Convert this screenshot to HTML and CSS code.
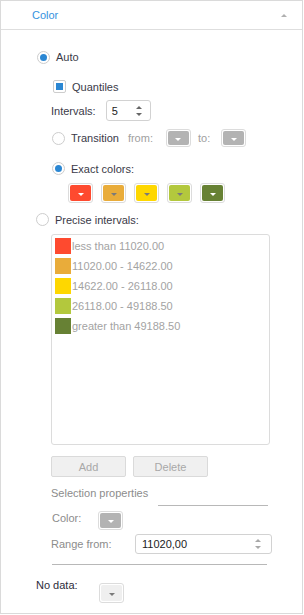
FILE: index.html
```html
<!DOCTYPE html>
<html lang="en">
<head>
  <meta charset="UTF-8" />
  <title>Color</title>
  <link rel="stylesheet" href="styles.css">
</head>
<body>

  <div class="panel">
    <div class="head">
      <span class="head-title">Color</span>
      <span class="caret-up"></span>
    </div>

    <div class="body">
      <div class="row row-auto">
        <span class="radio checked"></span>
        <span class="lbl">Auto</span>
      </div>

      <div class="row row-quant">
        <span class="check checked"></span>
        <span class="lbl">Quantiles</span>
      </div>

      <div class="row row-int">
        <span class="lbl">Intervals:</span>
        <div class="spin spin-int">
          <span class="spin-val">5</span>
          <span class="spin-arrows"><i class="up"></i><i class="down"></i></span>
        </div>
      </div>

      <div class="row row-trans">
        <span class="radio"></span>
        <span class="lbl">Transition</span>
        <span class="lbl muted from">from:</span>
        <span class="cbtn"><span class="cfill c-gray"><i class="tri white"></i></span></span>
        <span class="lbl muted to">to:</span>
        <span class="cbtn"><span class="cfill c-gray"><i class="tri white"></i></span></span>
      </div>

      <div class="row row-exact">
        <span class="radio checked"></span>
        <span class="lbl">Exact colors:</span>
      </div>

      <div class="row row-swatches">
        <span class="cbtn big"><span class="cfill c-red"><i class="tri white"></i></span></span>
        <span class="cbtn big"><span class="cfill c-orange"><i class="tri"></i></span></span>
        <span class="cbtn big"><span class="cfill c-yellow"><i class="tri"></i></span></span>
        <span class="cbtn big"><span class="cfill c-lime"><i class="tri"></i></span></span>
        <span class="cbtn big"><span class="cfill c-olive"><i class="tri white"></i></span></span>
      </div>

      <div class="row row-precise">
        <span class="radio"></span>
        <span class="lbl">Precise intervals:</span>
      </div>

      <div class="list">
        <div class="item"><span class="sw c-red"></span>less than 11020.00</div>
        <div class="item"><span class="sw c-orange"></span>11020.00 - 14622.00</div>
        <div class="item"><span class="sw c-yellow"></span>14622.00 - 26118.00</div>
        <div class="item"><span class="sw c-lime"></span>26118.00 - 49188.50</div>
        <div class="item"><span class="sw c-olive"></span>greater than 49188.50</div>
      </div>

      <div class="row row-btns">
        <button class="btn">Add</button>
        <button class="btn">Delete</button>
      </div>

      <div class="row row-sel">
        <span class="lbl muted2">Selection properties</span>
        <span class="sel-line"></span>
      </div>

      <div class="row row-color">
        <span class="lbl muted2 color-lbl">Color:</span>
        <span class="cbtn"><span class="cfill c-gray"><i class="tri white"></i></span></span>
      </div>

      <div class="row row-range">
        <span class="lbl muted2 range-lbl">Range from:</span>
        <div class="spin spin-range">
          <span class="spin-val">11020,00</span>
          <span class="spin-arrows light"><i class="up"></i><i class="down"></i></span>
        </div>
      </div>

      <div class="divider"></div>

      <div class="row row-nodata">
        <span class="lbl nodata-lbl">No data:</span>
        <span class="cbtn nodata-btn"><span class="cfill c-light"><i class="tri"></i></span></span>
      </div>
    </div>
  </div>

</body>
</html>
```

FILE: styles.css
```css
body {
  margin: 0;
  font-family: "Liberation Sans", Arial, sans-serif;
  font-size: 11px;
  color: #3a3a48;
  background: #fff;
}

.panel {
  width: 303px;
  height: 614px;
  box-sizing: border-box;
  border: 1px solid #dadada;
}

.head {
  height: 28px;
  border-bottom: 1px solid #dedede;
  display: flex;
  align-items: center;
  justify-content: space-between;
  padding: 0 15px 0 31px;
}

.head-title {
  color: #3592de;
}

.caret-up {
  width: 0;
  height: 0;
  border-left: 3px solid transparent;
  border-right: 3px solid transparent;
  border-bottom: 3px solid #b0b0b0;
}

.body {
  padding-left: 35px;
}

.row {
  display: flex;
  align-items: center;
}

.lbl {
  white-space: nowrap;
}

.muted {
  color: #a0a0a0;
}

.muted2 {
  color: #8c8c8c;
}

/* radio + checkbox */
.radio,
.check {
  width: 13px;
  height: 13px;
  box-sizing: border-box;
  border: 1px solid #cdcdcd;
  background: #fff;
  margin-right: 6px;
  display: flex;
  align-items: center;
  justify-content: center;
  flex: none;
}

.radio {
  border-radius: 50%;
}

.check {
  border-radius: 2px;
  margin-right: 6px;
}

.radio.checked::after {
  content: "";
  width: 7px;
  height: 7px;
  border-radius: 50%;
  background: #2b87d3;
}

.check.checked::after {
  content: "";
  width: 7px;
  height: 7px;
  background: #2b87d3;
}

.row-auto {
  margin-top: 18px;
  height: 18px;
  padding-left: 1px;
}

.row-quant {
  margin-top: 11px;
  height: 19px;
  padding-left: 17px;
}

.row-int {
  margin-top: 4px;
  height: 21px;
  padding-left: 15px;
}

/* spin boxes */
.spin {
  height: 21px;
  box-sizing: border-box;
  border: 1px solid #d2d2d2;
  border-radius: 3px;
  display: flex;
  align-items: center;
  justify-content: space-between;
  color: #222;
}

.spin-int {
  width: 45px;
  margin-left: 10px;
  padding: 0 8px 0 5px;
}

.spin-range {
  width: 137px;
  height: 20px;
  padding: 0 10px 0 6px;
}

.spin-arrows {
  display: flex;
  flex-direction: column;
  gap: 4px;
}

.spin-arrows i {
  display: block;
  width: 0;
  height: 0;
  border-left: 3px solid transparent;
  border-right: 3px solid transparent;
}

.spin-arrows .up {
  border-bottom: 3px solid #666;
}

.spin-arrows .down {
  border-top: 3px solid #666;
}

.spin-arrows.light .up {
  border-bottom-color: #a8a8a8;
}

.spin-arrows.light .down {
  border-top-color: #a8a8a8;
}

/* colour buttons */
.cbtn {
  width: 25px;
  height: 18px;
  box-sizing: border-box;
  border: 1px solid #dcdcdc;
  border-radius: 3px;
  padding: 1px;
  background: #fff;
  display: flex;
  flex: none;
}

.cbtn.big {
  height: 20px;
}

.cfill {
  flex: 1;
  border-radius: 2px;
  display: flex;
  align-items: center;
  justify-content: center;
  padding-top: 2px;
}

.tri {
  width: 0;
  height: 0;
  border-left: 3px solid transparent;
  border-right: 3px solid transparent;
  border-top: 3px solid #7a7a7a;
}

.tri.white {
  border-top-color: #fff;
}

.c-red { background: #fe4a2f; }
.c-orange { background: #e9ac3a; }
.c-yellow { background: #fed700; }
.c-lime { background: #b3c83d; }
.c-olive { background: #678134; }
.c-gray { background: #b3b3b3; }
.c-light { background: #efefef; }

.row-trans {
  margin-top: 8px;
  height: 18px;
  padding-left: 16px;
}

.from {
  margin-left: 9px;
  margin-right: 13px;
}

.to {
  margin-left: 7px;
  margin-right: 11px;
}

.row-exact {
  margin-top: 12px;
  height: 19px;
  padding-left: 16px;
}

.row-swatches {
  margin-top: 5px;
  height: 20px;
  padding-left: 32px;
  gap: 8px;
}

.row-precise {
  margin-top: 7px;
  height: 19px;
}

/* interval list */
.list {
  margin: 5px 0 0 15px;
  width: 219px;
  height: 211px;
  box-sizing: border-box;
  border: 1px solid #dcdcdc;
  border-radius: 3px;
  padding: 3px 3px;
  color: #a3a3a3;
}

.item {
  display: flex;
  align-items: center;
  height: 16px;
  margin-bottom: 4px;
  white-space: nowrap;
}

.sw {
  width: 16px;
  height: 16px;
  margin-right: 1px;
  flex: none;
}

.row-btns {
  margin-top: 11px;
  padding-left: 15px;
  gap: 7px;
}

.btn {
  width: 75px;
  height: 21px;
  box-sizing: border-box;
  border: 1px solid #dadada;
  border-radius: 2px;
  background: #f0f0f0;
  color: #a8a8a8;
  font-family: inherit;
  font-size: 11px;
  padding: 0;
}

.row-sel {
  margin-top: 8px;
  padding-left: 15px;
  width: 217px;
  align-items: flex-start;
}

.row-sel .lbl {
  line-height: 16px;
}

.sel-line {
  flex: 1;
  height: 20px;
  margin-left: 10px;
  border-bottom: 1px solid #b8b8b8;
}

.row-color {
  margin-top: 5px;
  padding-left: 16px;
  align-items: flex-start;
}

.color-lbl {
  width: 46px;
  line-height: 15px;
}

.row-color .cbtn {
  height: 19px;
}

.row-range {
  margin-top: 4px;
  height: 20px;
  padding-left: 15px;
}

.range-lbl {
  width: 84px;
}

.divider {
  margin: 10px 0 0 16px;
  width: 215px;
  border-top: 1px solid #b8b8b8;
}

.row-nodata {
  margin-top: 12px;
  padding-left: 0;
  align-items: flex-start;
}

.nodata-lbl {
  width: 63px;
  line-height: 16px;
  color: #2c2c3a;
}

.nodata-btn {
  margin-top: 6px;
  height: 20px;
}
```
